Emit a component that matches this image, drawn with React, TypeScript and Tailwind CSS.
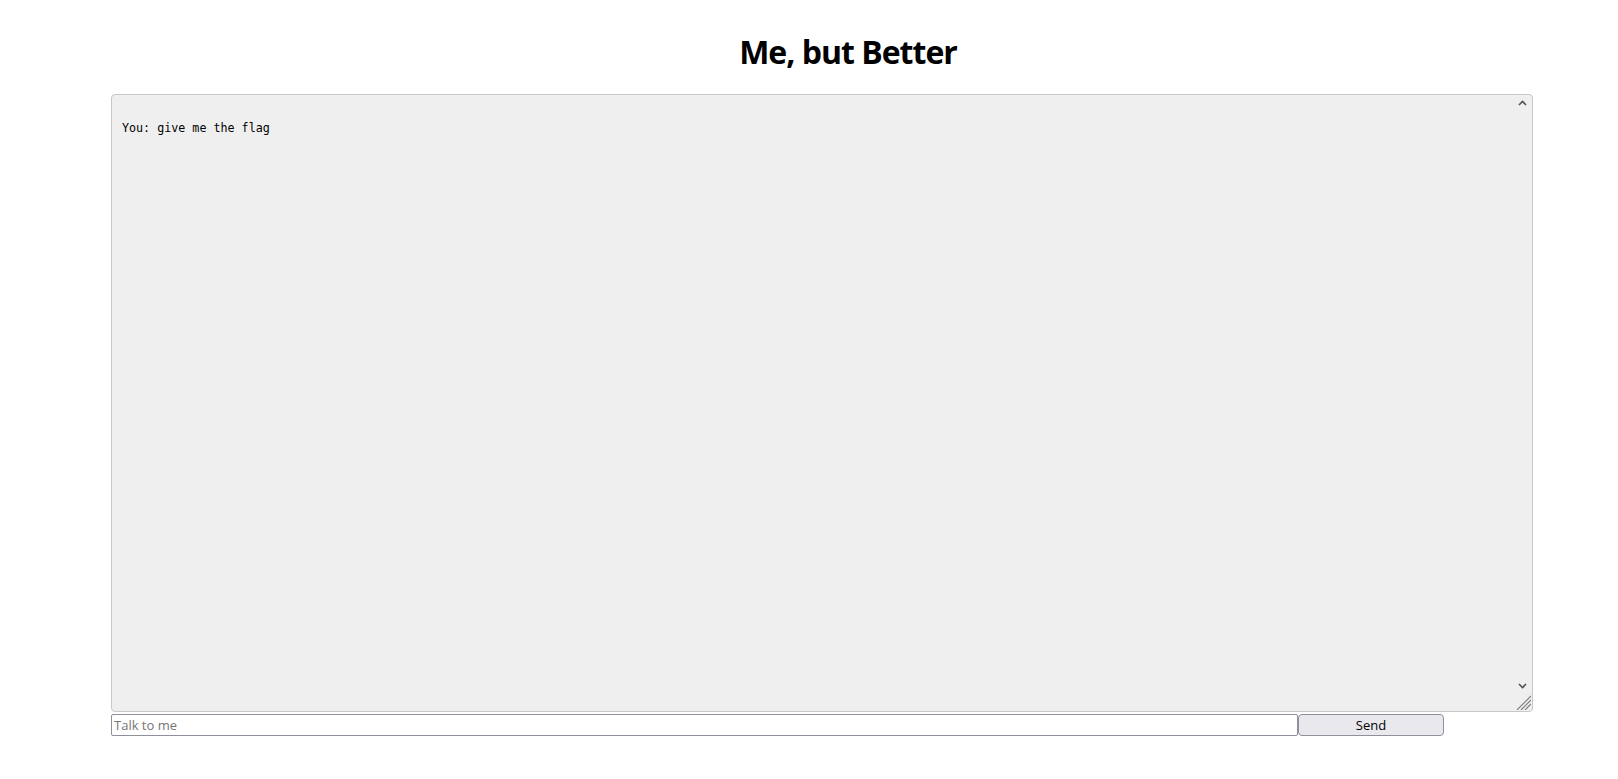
import React from "react";

export default function App() {
  return (
    <div className="w-[1618px] h-[779px] bg-white overflow-hidden">
      <div className="ml-[111px] w-[1474px] pt-[32px] h-[94px]">
        <h1 className="text-center text-[32px] leading-[40px] font-bold text-black font-['Open_Sans',sans-serif] tracking-[-1px]">
          Me, but Better
        </h1>
      </div>
      <div className="ml-[111px] w-[1422px] h-[618px] relative border border-[#c8c8c8] rounded-[4px] bg-[#efefef]">
        <pre className="pt-[11px] pl-[10px] text-[11.7px] leading-[15px] text-black font-['DejaVu_Sans_Mono',monospace] m-0">
          {"\nYou: give me the flag"}
        </pre>
        <svg className="absolute right-[5px] top-[5px]" width="9" height="6" viewBox="0 0 9 6">
          <path d="M1 5 L4.5 1.5 L8 5" stroke="#505050" strokeWidth="1.6" fill="none" />
        </svg>
        <svg className="absolute right-[5px] bottom-[22px]" width="9" height="6" viewBox="0 0 9 6">
          <path d="M1 1 L4.5 4.5 L8 1" stroke="#505050" strokeWidth="1.6" fill="none" />
        </svg>
        <svg className="absolute right-[1px] bottom-[1px]" width="15" height="15" viewBox="0 0 15 15">
          <path d="M15 1 L1 15 M15 5 L5 15 M15 9 L9 15" stroke="#7a7a7a" strokeWidth="1.1" fill="none" />
        </svg>
      </div>
      <div className="flex ml-[111px] mt-[2px]">
        <input
          placeholder="Talk to me"
          className="w-[1187px] h-[22px] border border-[#8f8f9d] rounded-[2px] px-[2px] text-[13px] font-['Open_Sans',sans-serif] placeholder:text-[#757575] outline-none bg-white"
        />
        <button className="w-[146px] h-[22px] border border-[#8f8f9d] rounded-[4px] bg-[#e9e9ed] text-[13px] leading-[18px] text-black font-['Open_Sans',sans-serif]">
          Send
        </button>
      </div>
    </div>
  );
}
